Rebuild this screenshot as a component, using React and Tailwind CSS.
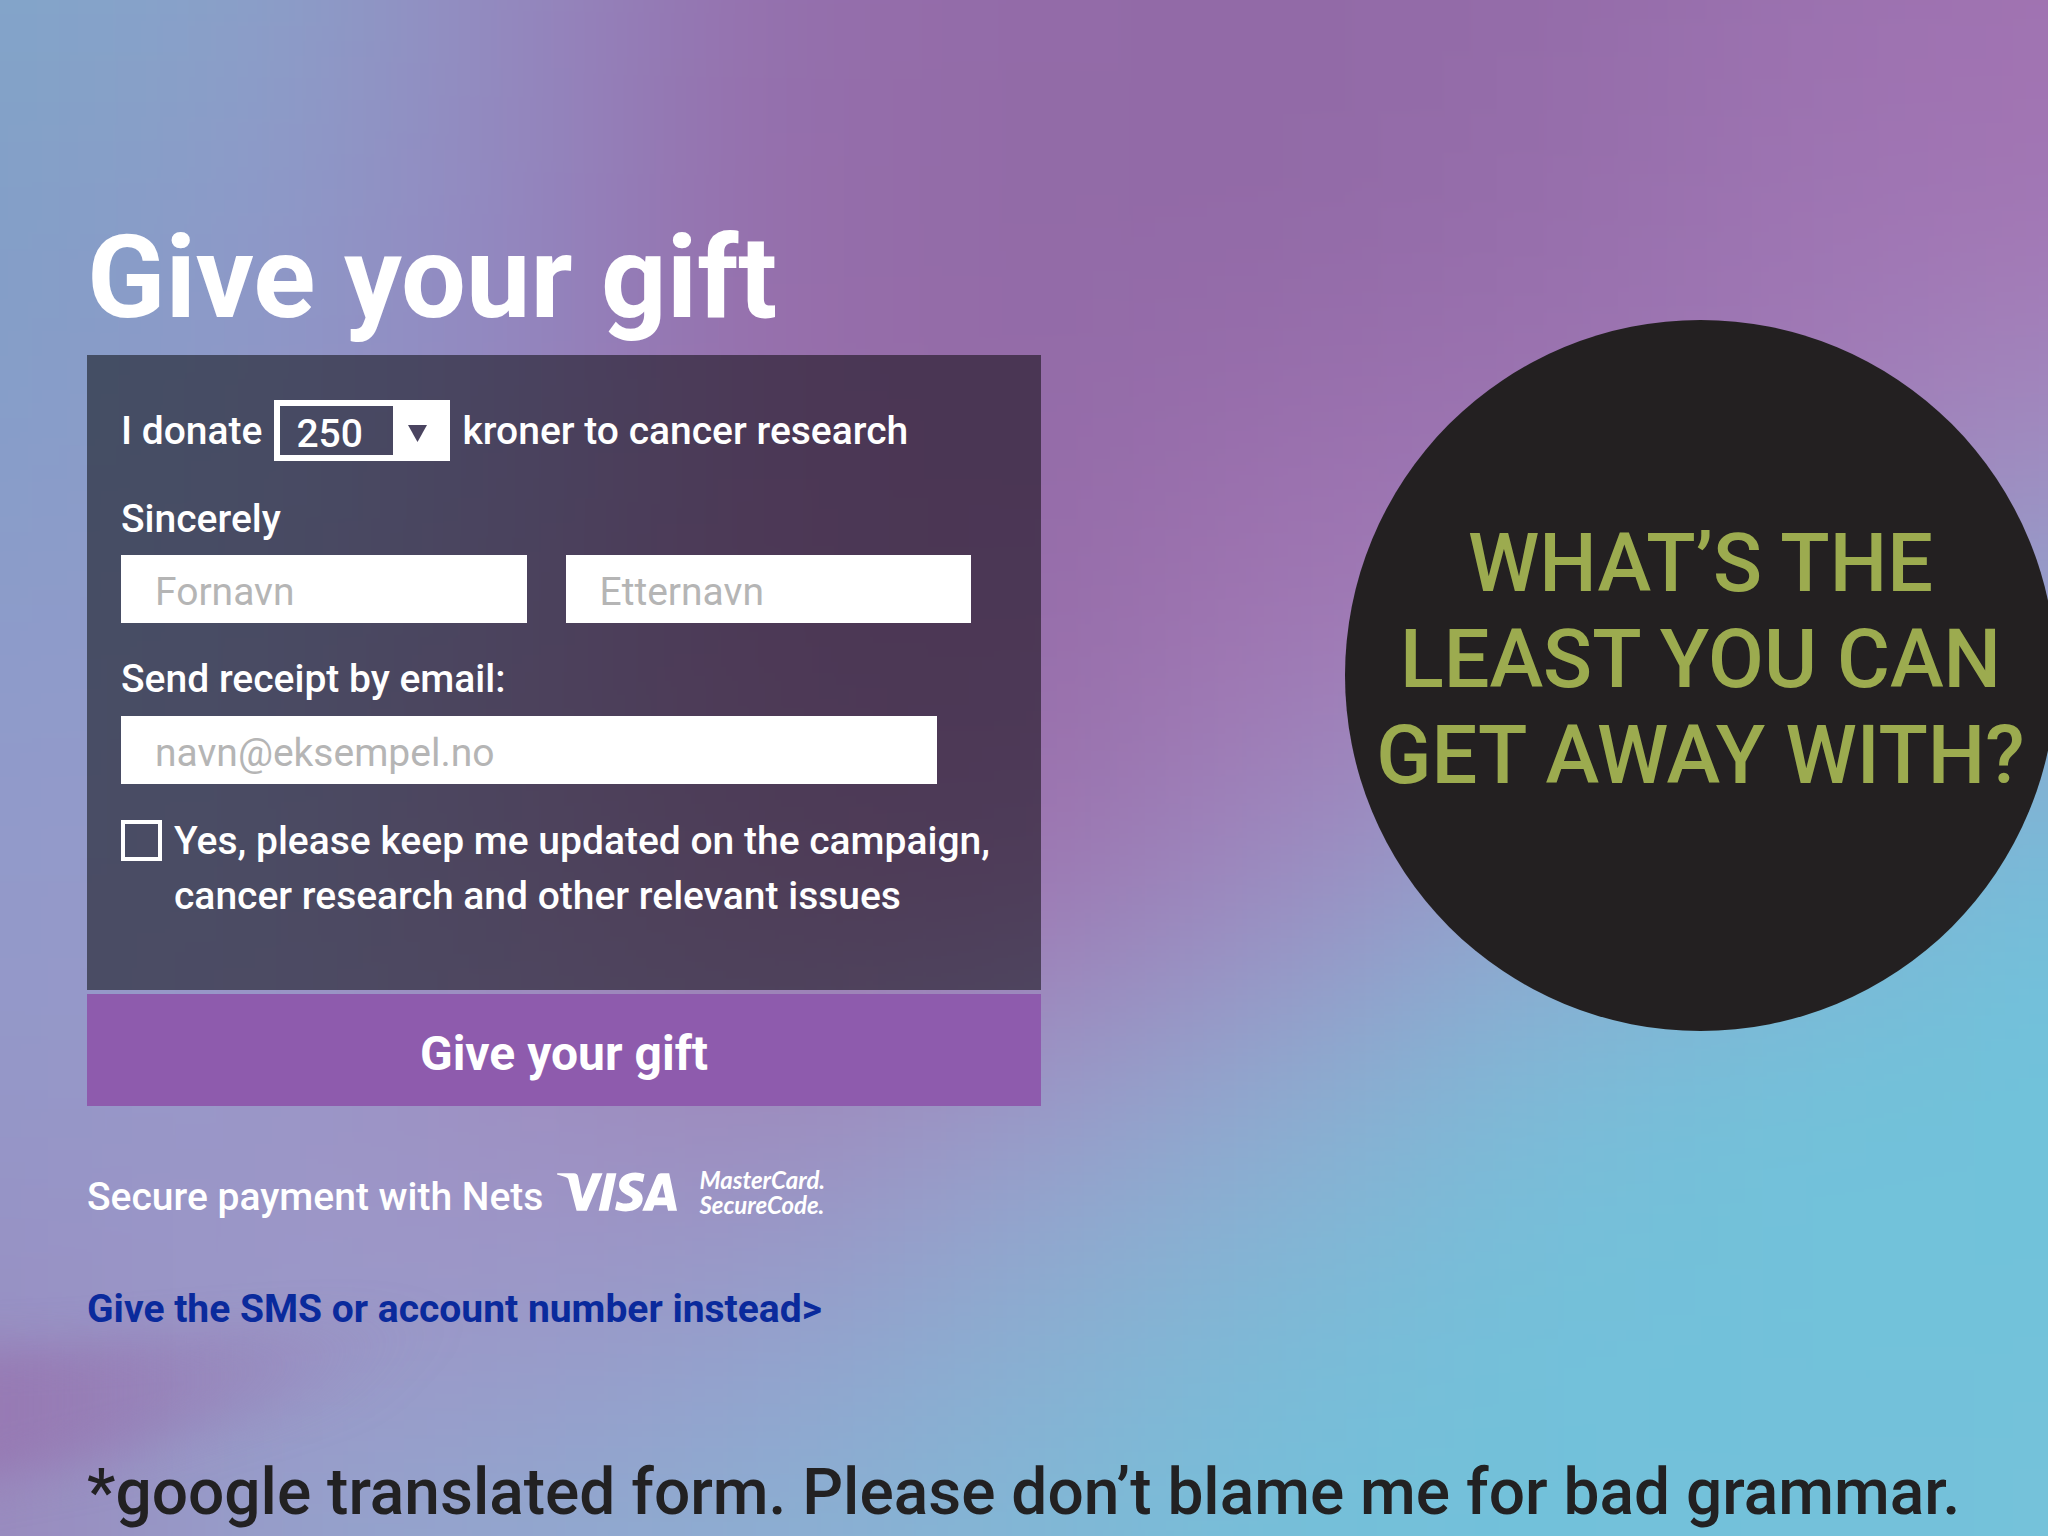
import React from 'react';
import { SiVisa } from 'react-icons/si';

// Colour samples of the backdrop, left to right, top to bottom
const BACKDROP = [
  ['#82a6c9', '#8aa1c9', '#9489bf', '#956fad', '#936ba8', '#926aa7', '#946ca9', '#9b71af', '#a173b2'],
  ['#829fc8', '#8e9ac9', '#9387c0', '#966eab', '#926ba7', '#926aa7', '#966eab', '#9e75b3', '#a376b5'],
  ['#869fc9', '#8f98c8', '#9388c0', '#986fab', '#946ba8', '#9a70ae', '#9d75b2', '#a07ab6', '#a38cc0'],
  ['#8e9ccb', '#9298c8', '#9885ba', '#9b70ab', '#966eaa', '#a278b4', '#9f84bd', '#9a98c8', '#8fa6cf'],
  ['#939bcb', '#9698c8', '#9b88bb', '#9c7aaf', '#9e74b0', '#9d8ac0', '#94a4ce', '#85b2d4', '#74bfda'],
  ['#9497c8', '#9b97c8', '#9f91c4', '#a08abd', '#9d98c8', '#90abd0', '#7cbcd8', '#72c2da', '#70c3db'],
  ['#9890c4', '#9c97c8', '#9c97c8', '#969ecc', '#8caed1', '#7dbad7', '#73c1da', '#72c2da', '#72c2da'],
  ['#9a88bc', '#95a0cb', '#91a8cf', '#8bb0d3', '#80b8d6', '#74c0da', '#72c2da', '#74c1da', '#76c2da'],
];

const clamp = (n, max) => Math.min(Math.max(n, 0), max);

function Backdrop() {
  const cells = [];
  for (let row = -2; row < 10; row++) {
    for (let col = -2; col < 11; col++) {
      cells.push(
        <rect
          key={`${row}-${col}`}
          x={col * 196 - 99}
          y={row * 168 - 85}
          width="198"
          height="170"
          fill={BACKDROP[clamp(row, 7)][clamp(col, 8)]}
        />
      );
    }
  }

  return (
    <svg
      className="absolute inset-0 -z-10 h-full w-full"
      viewBox="0 0 1568 1176"
      preserveAspectRatio="none"
      aria-hidden="true"
    >
      <defs>
        <filter id="soft" filterUnits="userSpaceOnUse" x="-400" y="-400" width="2400" height="2000" colorInterpolationFilters="sRGB">
          <feGaussianBlur stdDeviation="85" />
        </filter>
        <filter id="streak" filterUnits="userSpaceOnUse" x="-400" y="800" width="1200" height="600" colorInterpolationFilters="sRGB">
          <feGaussianBlur stdDeviation="34 16" />
        </filter>
        <linearGradient id="streakFill" x1="0" y1="0" x2="1" y2="0">
          <stop offset="0.3" stopColor="#9672ae" stopOpacity="0.7" />
          <stop offset="1" stopColor="#9672ae" stopOpacity="0" />
        </linearGradient>
      </defs>
      <g filter="url(#soft)">{cells}</g>
      <path d="M-100 1036 L60 1030 L320 1004 L240 1070 L60 1120 L-100 1150 Z" fill="url(#streakFill)" filter="url(#streak)" />
    </svg>
  );
}

function TextField({ label, ...props }) {
  return (
    <input
      aria-label={label}
      className="h-[68px] w-full min-w-0 bg-white px-[34px] pt-[6px] text-[39px] font-normal text-[#4a3458] outline-none placeholder:text-[#b5b5b5]"
      {...props}
    />
  );
}

function AmountSelect() {
  return (
    <span className="relative inline-flex">
      <select
        id="amount"
        defaultValue="250"
        className="h-[61px] w-[176px] appearance-none border-y-6 border-r-[57px] border-l-6 border-white bg-transparent pt-1 pl-4 text-white outline-none"
      >
        <option>100</option>
        <option>250</option>
        <option>500</option>
      </select>
      <svg className="pointer-events-none absolute top-[25px] right-[23px] h-[17px] w-[19px]" viewBox="0 0 19 17" aria-hidden="true">
        <path d="M0 0h19L9.500 17z" fill="#4a4460" />
      </svg>
    </span>
  );
}

function DonationForm() {
  return (
    <form onSubmit={(e) => e.preventDefault()}>
      <div className="bg-black/50 px-[34px] pt-[45px] pb-[66px]">
        <div className="flex items-center gap-3">
          <label htmlFor="amount">I donate</label>
          <AmountSelect />
          <span>kroner to cancer research</span>
        </div>

        <fieldset className="mt-[34px]">
          <legend className="mb-3">Sincerely</legend>
          <div className="grid grid-cols-2 gap-[39px] pr-9">
            <TextField label="Fornavn" placeholder="Fornavn" />
            <TextField label="Etternavn" placeholder="Etternavn" />
          </div>
        </fieldset>

        <div className="mt-8 pr-[70px]">
          <label htmlFor="email" className="mb-[13px] block">Send receipt by email:</label>
          <TextField id="email" type="email" placeholder="navn@eksempel.no" />
        </div>

        <label className="mt-[30px] flex items-start gap-3 leading-[55px]">
          <input type="checkbox" className="mt-[6px] size-[41px] shrink-0 appearance-none border-4 border-white checked:bg-white" />
          <span className="-mr-8">
            Yes, please keep me updated on the campaign,
            <br />
            cancer research and other relevant issues
          </span>
        </label>
      </div>

      <button type="submit" className="mt-1 h-28 w-full bg-[#8e5bad] pt-2 text-[48px] font-bold">
        Give your gift
      </button>
    </form>
  );
}

export default function App() {
  return (
    <main className="relative isolate min-h-screen overflow-hidden font-['Roboto',sans-serif] text-[39px] leading-[48px] font-medium text-white">
      <Backdrop />

      <div className="flex items-start justify-between pl-[87px]">
        <section className="w-full max-w-[954px] pt-[218px]">
          <h1 className="mb-[17px] text-[115px] leading-[120px] font-bold">Give your gift</h1>
          <DonationForm />

          <div className="mt-[61px] flex items-start">
            <span className="pt-[6px]">Secure payment with Nets</span>
            <SiVisa viewBox="0 8 24 8" className="mt-[5px] ml-[14px] h-[40px] w-[120px]" title="Visa" />
            <span className="ml-[22px] font-['Lato',sans-serif] text-[24px] leading-[25px] font-bold italic">
              MasterCard.
              <br />
              SecureCode.
            </span>
          </div>

          <a href="#sms" className="mt-16 block font-bold text-[#0a2a9c]">
            Give the SMS or account number instead&gt;
          </a>
        </section>

        <aside className="mt-80 -mr-2 flex size-[711px] shrink-0 items-center justify-center rounded-full bg-[#232021] pb-8 text-center text-[81px] leading-[96px] font-medium text-[#9cab4f]">
          <p>
            WHAT’S THE
            <br />
            LEAST YOU CAN
            <br />
            GET AWAY WITH?
          </p>
        </aside>
      </div>

      <p className="mt-[120px] pl-[87px] text-[64px] leading-[80px] whitespace-nowrap text-[#222122]">
        *google translated form. Please don’t blame me for bad grammar.
      </p>
    </main>
  );
}
